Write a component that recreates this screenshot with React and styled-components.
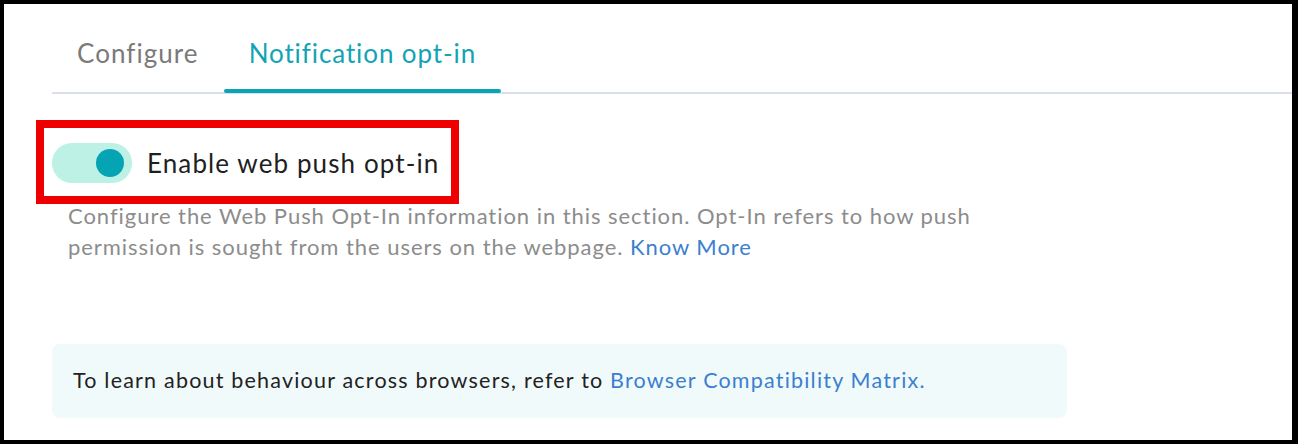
import React from 'react'
import styled, { createGlobalStyle } from 'styled-components'

const Global = createGlobalStyle`
  html, body {
    margin: 0;
    padding: 0;
    background: #000;
  }
  * {
    box-sizing: border-box;
  }
`

const Frame = styled.div`
  width: 1298px;
  height: 444px;
  border-style: solid;
  border-color: #000;
  border-width: 4px 6px 4px 4px;
  background: #fff;
  font-family: 'Lato', 'Open Sans', sans-serif;
  overflow: hidden;
`

const TabBar = styled.div`
  display: flex;
  margin-left: 48px;
  height: 90px;
  border-bottom: 2px solid #d9e0ec;
`

const Tab = styled.div`
  position: relative;
  display: flex;
  align-items: center;
  padding: 10px 25px 0;
  font-size: 26px;
  letter-spacing: ${p => (p.active ? '0.9px' : '1.05px')};
  color: ${p => (p.active ? '#12a3b4' : '#7a7a7a')};

  &::after {
    content: '';
    display: ${p => (p.active ? 'block' : 'none')};
    position: absolute;
    left: 0;
    right: 0;
    bottom: -1px;
    height: 4px;
    border-radius: 2px;
    background: #0aa5b5;
  }
`

const Content = styled.div`
  padding: 26px 0 0 32px;
`

const Highlight = styled.div`
  display: inline-flex;
  align-items: center;
  gap: 15px;
  border: 8px solid #ee0000;
  padding: 15px 12px 13px 8px;
`

const Track = styled.div`
  width: 80px;
  height: 40px;
  border-radius: 20px;
  background: #bdf1e5;
  display: flex;
  align-items: center;
  justify-content: flex-end;
  padding-right: 8px;
`

const Knob = styled.div`
  width: 28px;
  height: 28px;
  border-radius: 50%;
  background: #05a4b4;
`

const Label = styled.span`
  font-size: 26px;
  letter-spacing: 1.1px;
  color: #1f1f1f;
`

const Description = styled.p`
  margin: -4px 0 0;
  padding-left: 32px;
  max-width: 950px;
  font-size: 22px;
  letter-spacing: 0.95px;
  line-height: 31px;
  color: #8c8c8c;
`

const Link = styled.a`
  color: #3b7fcf;
  text-decoration: none;
`

const InfoBox = styled.div`
  margin: 82px 0 0 16px;
  width: 1015px;
  height: 74px;
  border-radius: 8px;
  background: #f1fafa;
  display: flex;
  align-items: center;
  padding: 0 0 3px 21px;
  font-size: 21.5px;
  letter-spacing: 1.2px;
  color: #222;
`

export default function App() {
  return (
    <>
      <Global />
      <Frame>
        <TabBar>
          <Tab>Configure</Tab>
          <Tab active>Notification opt-in</Tab>
        </TabBar>
        <Content>
          <Highlight>
            <Track>
              <Knob />
            </Track>
            <Label>Enable web push opt-in</Label>
          </Highlight>
          <Description>
            Configure the Web Push Opt-In information in this section. Opt-In refers to how push
            permission is sought from the users on the webpage. <Link href="#">Know More</Link>
          </Description>
          <InfoBox>
            <span>
              To learn about behaviour across browsers, refer to{' '}
              <Link href="#">Browser Compatibility Matrix.</Link>
            </span>
          </InfoBox>
        </Content>
      </Frame>
    </>
  )
}
